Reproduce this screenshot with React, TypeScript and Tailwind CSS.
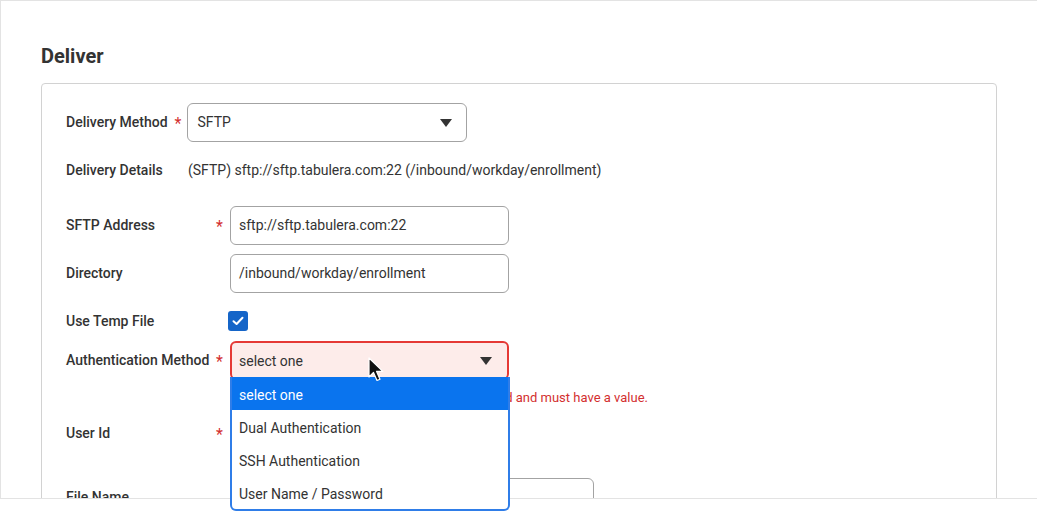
import React from "react";

const FONT = { fontFamily: "Roboto, 'Liberation Sans', Arial, sans-serif" };

function Arrow() {
  return (
    <svg width="12" height="8" viewBox="0 0 12 8" className="shrink-0">
      <path d="M0 0 H12 L6 8 Z" fill="#333" />
    </svg>
  );
}

function Star() {
  return <span className="text-[16px] leading-none text-[#d32f2f]">*</span>;
}

function Row({
  label,
  required,
  children,
  className = "",
}: {
  label: string;
  required?: boolean;
  children?: React.ReactNode;
  className?: string;
}) {
  return (
    <div className={`flex items-center ${className}`}>
      <div className="w-[150px] text-[14px] font-medium text-[#333]">{label}</div>
      <div className="w-[14px] pt-[2px]">{required && <Star />}</div>
      {children}
    </div>
  );
}

function TextInput({ value, w = "w-[279px]" }: { value?: string; w?: string }) {
  return (
    <div
      className={`${w} flex h-[39px] items-center rounded-[6px] border border-[#a3a3a3] bg-white px-[8px] text-[14px] text-[#333]`}
    >
      {value}
    </div>
  );
}

const OPTIONS = ["select one", "Dual Authentication", "SSH Authentication", "User Name / Password"];

export default function App() {
  return (
    <div className="relative h-[515px] w-[1037px] overflow-hidden bg-white" style={FONT}>
      <div className="h-[499px] overflow-hidden border-b border-l border-t border-[#e3e3e3] pl-[40px] pr-[40px] pt-[41px]">
        <h2 className="text-[20px] font-bold leading-[28px] text-[#333]">Deliver</h2>

        <div className="mt-[13px] h-[600px] w-[956px] rounded-[4px] border border-[#d2d2d2] pl-[24px] pt-[19px]">
          {/* delivery method */}
          <div className="flex h-[39px] items-center">
            <span className="text-[14px] font-medium text-[#333]">Delivery Method</span>
            <span className="ml-[7px] mr-[6px] pt-[2px]">
              <Star />
            </span>
            <div className="flex h-[39px] w-[280px] items-center justify-between rounded-[6px] border border-[#a3a3a3] pl-[9px] pr-[14px] text-[14px] text-[#333]">
              <span>SFTP</span>
              <Arrow />
            </div>
          </div>

          <div className="mt-[18px] flex h-5 items-center text-[14px] text-[#333]">
            <span className="w-[122px] font-medium">Delivery Details</span>
            <span>(SFTP) sftp://sftp.tabulera.com:22 (/inbound/workday/enrollment)</span>
          </div>

          <Row label="SFTP Address" required className="mt-[26px]">
            <TextInput value="sftp://sftp.tabulera.com:22" />
          </Row>
          <Row label="Directory" className="mt-[9px]">
            <TextInput value="/inbound/workday/enrollment" />
          </Row>
          <Row label="Use Temp File" className="mt-[18px] h-5">
            <div className="-ml-[2px] flex h-5 w-5 items-center justify-center rounded-[3px] bg-[#1565c8]">
              <svg width="12" height="10" viewBox="0 0 12 10">
                <path d="M1.5 5.2 L4.6 8 L10.5 1.8" fill="none" stroke="#fff" strokeWidth="2" strokeLinecap="round" strokeLinejoin="round" />
              </svg>
            </div>
          </Row>
          <Row label="Authentication Method" required className="mt-[10px]">
            <div className="flex h-[39px] w-[279px] items-center justify-between rounded-[6px] border-2 border-[#e53935] bg-[#fdecea] pb-[1px] pl-[7px] pr-[15px] pt-[2px] text-[14px] text-[#333]">
              <span>select one</span>
              <Arrow />
            </div>
          </Row>
          <div className="ml-[164px] mt-[10px] h-4 w-[418px] whitespace-nowrap text-right text-[13px] leading-4 text-[#d32f2f]">
            The field Authentication Method is required and must have a value.
          </div>
          <Row label="User Id" required className="mt-[8px]">
            <TextInput />
          </Row>
          <Row label="File Name" className="mt-[25px]">
            <TextInput w="w-[364px]" />
          </Row>
        </div>
      </div>

      {/* open dropdown list */}
      <div className="absolute left-[230px] top-[377px] w-[280px] overflow-hidden rounded-b-[6px] border-2 border-t-0 border-[#2f7de8] bg-white text-[14px] text-[#333]">
        {OPTIONS.map((o, i) => (
          <div
            key={o}
            className={`flex h-[33px] items-center px-[7px] pt-[4px] ${i === 0 ? "bg-[#0a74ee] text-white" : ""}`}
          >
            {o}
          </div>
        ))}
      </div>

      {/* mouse pointer */}
      <svg className="absolute left-[368px] top-[357px]" width="18" height="27" viewBox="0 0 18 27">
        <path
          d="M1 1 L1 20 L5.5 15.5 L9 23.5 L12 22.2 L8.6 14.4 L14.8 14.4 Z"
          fill="#111"
          stroke="#fff"
          strokeWidth="1.2"
          strokeLinejoin="round"
        />
      </svg>
    </div>
  );
}
